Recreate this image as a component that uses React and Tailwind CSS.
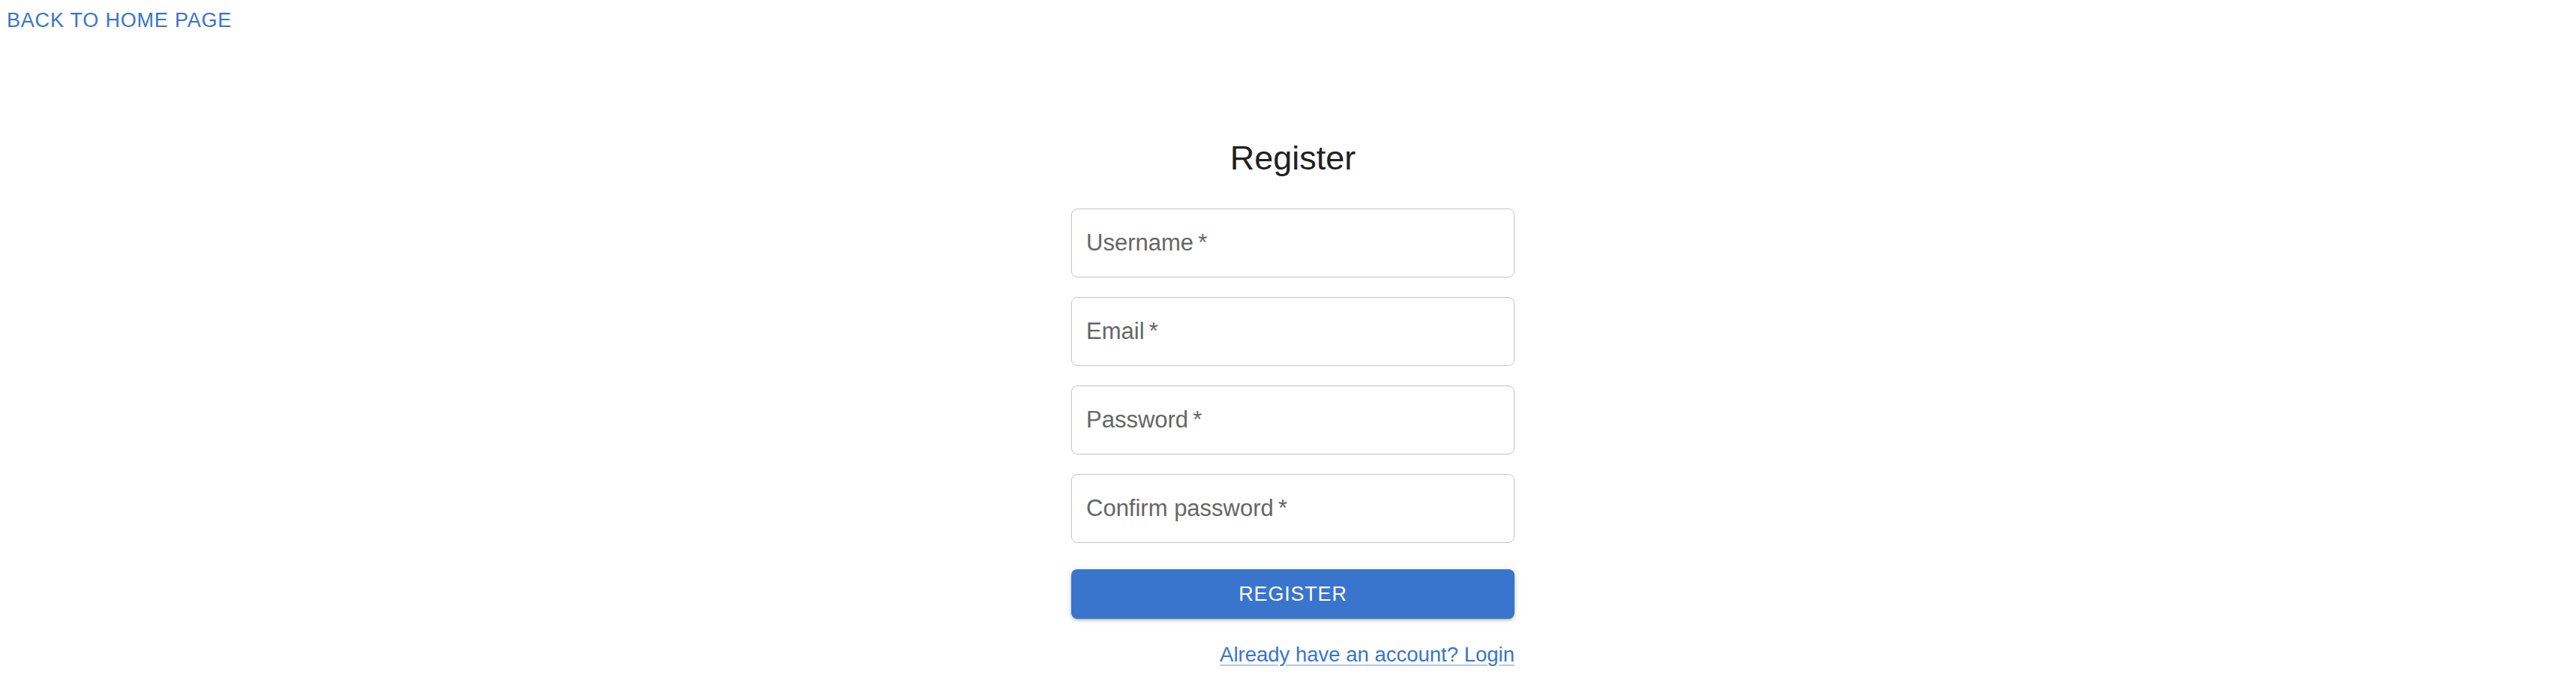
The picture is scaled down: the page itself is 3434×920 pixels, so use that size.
import { useState } from "react";

const fields = [
  { name: "username", label: "Username" },
  { name: "email", label: "Email" },
  { name: "password", label: "Password" },
  { name: "confirm", label: "Confirm password" },
];

const Field = ({ label }) => {
  return (
    <div className="h-[92px] border border-[#c4c4c4] rounded-[8px] flex items-center pl-[19px]">
      <span className="text-[31px] leading-[36px] text-[#666666]">
        {label}
        {"\u2009*"}
      </span>
    </div>
  );
};

const App = () => {
  const [values] = useState({});

  return (
    <div className="min-h-screen bg-white font-['Liberation_Sans',Arial,sans-serif]">
      {/* back link */}
      <div className="pt-[12px] pl-[9px]">
        <a
          href="#"
          className="text-[27px] leading-[30px] tracking-[0.8px] text-[#3975cc]"
        >
          BACK TO HOME PAGE
        </a>
      </div>

      {/* form */}
      <div className="ml-[1428px] w-[591px] flex flex-col">
        <h1 className="mt-[139px] text-center text-[45px] leading-[58px] text-[#212121]">
          Register
        </h1>

        <div className="mt-[38px] flex flex-col gap-[26px]">
          {fields.map((f) => (
            <Field key={f.name} label={f.label} value={values[f.name]} />
          ))}
        </div>

        <button className="mt-[35px] h-[66px] rounded-[8px] bg-[#3975cc] text-white text-[27px] tracking-[0.8px] shadow-[0_3px_2px_-2px_rgba(0,0,0,0.2),0_2px_4px_0_rgba(0,0,0,0.14),0_1px_10px_0_rgba(0,0,0,0.12)]">
          REGISTER
        </button>

        <div className="mt-[33px] flex justify-end">
          <a
            href="#"
            className="text-[27.5px] leading-[30px] text-[#3975cc] underline decoration-[rgba(57,117,204,0.4)] underline-offset-[4px]"
          >
            Already have an account? Login
          </a>
        </div>
      </div>
    </div>
  );
};

export default App;
